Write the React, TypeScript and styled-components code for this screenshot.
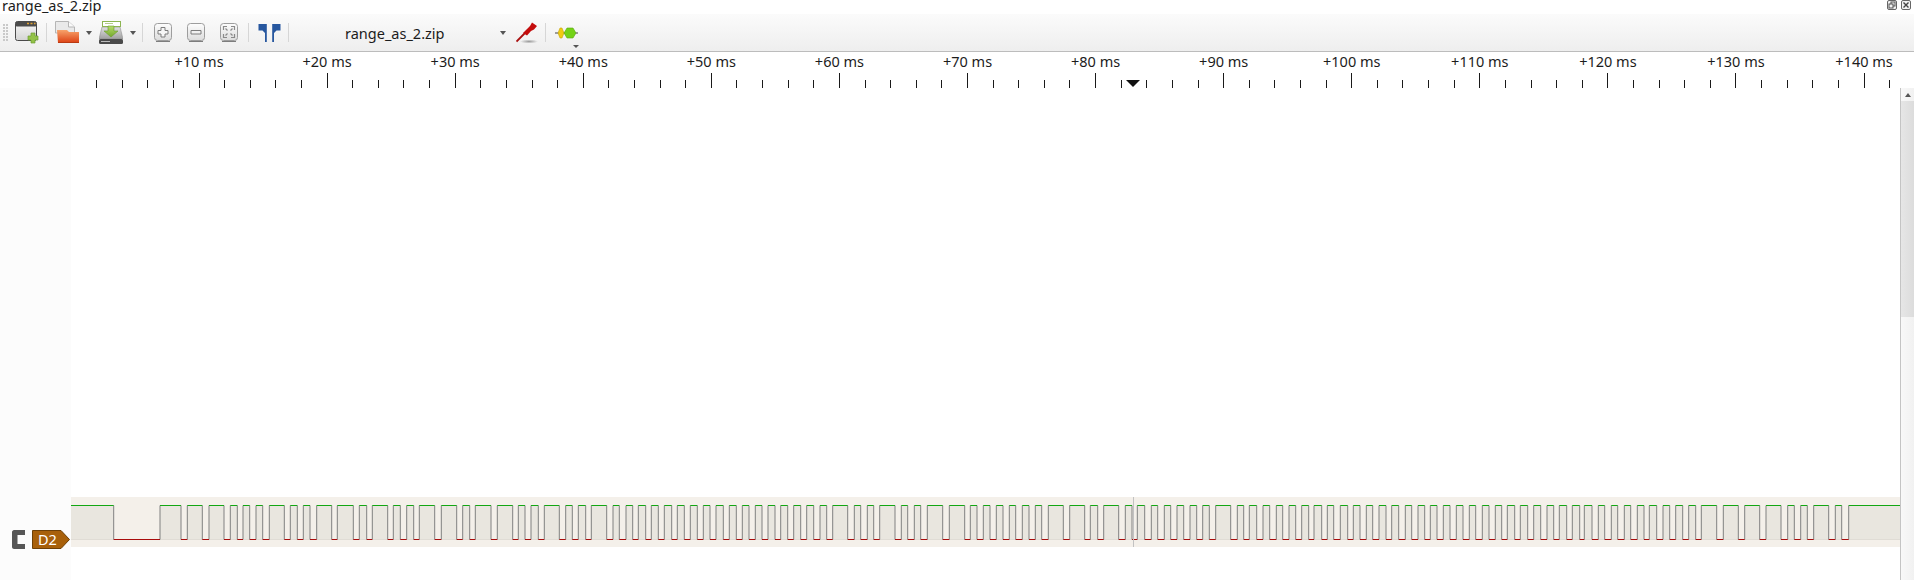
import React from "react";
import styled, { createGlobalStyle } from "styled-components";

const GlobalStyle = createGlobalStyle`
    html, body {
        margin: 0;
        padding: 0;
        background: #fff;
        overflow: hidden;
    }
`;

const UI_FONT = `"Noto Sans", "Open Sans", "DejaVu Sans", sans-serif`;

const Page = styled.div`
    display: flex;
    flex-direction: column;
    width: 1914px;
    height: 580px;
    overflow: hidden;
    font-family: ${UI_FONT};
    color: #1c1c1c;
`;

const TitleBar = styled.div`
    position: relative;
    z-index: 1;
    display: flex;
    justify-content: space-between;
    flex: none;
    height: 14px;
`;

const TitleText = styled.div`
    padding: 1px 0 0 2px;
    font-size: 14.5px;
    line-height: 9px;
    white-space: nowrap;
`;

const WindowButtons = styled.div`
    display: flex;
    gap: 4px;
    padding-right: 3px;
`;

const Toolbar = styled.div`
    display: flex;
    align-items: center;
    flex: none;
    box-sizing: border-box;
    height: 38px;
    padding-left: 3px;
    background: linear-gradient(#fbfbfb, #eeeeee);
    border-bottom: 1px solid #bcbcbc;
`;

const Grip = styled.div`
    width: 6px;
    height: 17px;
    margin-right: 2px;
    background-image: radial-gradient(circle at 1px 1px, #c9c9c9 0.8px, transparent 1px);
    background-size: 3px 3px;
`;

const ToolButton = styled.div<{ $w: number }>`
    display: flex;
    align-items: center;
    justify-content: center;
    flex: none;
    width: ${(p) => p.$w}px;
    height: 30px;
`;

const Separator = styled.div`
    flex: none;
    width: 1px;
    height: 19px;
    margin: 0 4px 0 3px;
    background: #d6d6d6;
`;

const DropArrow = styled.div`
    width: 0;
    height: 0;
    border-left: 3.5px solid transparent;
    border-right: 3.5px solid transparent;
    border-top: 4px solid #555;
`;

const FileCombo = styled.div`
    display: flex;
    align-items: center;
    justify-content: space-between;
    box-sizing: border-box;
    flex: none;
    width: 218px;
    padding: 0 5px 0 52px;
    font-size: 14.5px;
    white-space: nowrap;
`;

const DecoderWrap = styled(ToolButton)`
    position: relative;
`;

const SmallArrow = styled(DropArrow)`
    position: absolute;
    right: 3px;
    bottom: 0;
    border-left-width: 3px;
    border-right-width: 3px;
    border-top-width: 3px;
`;

const Ruler = styled.div`
    display: flex;
    flex-direction: column;
    justify-content: flex-end;
    flex: none;
    height: 36px;
    background: #fff;
`;

const RulerLabels = styled.div`
    display: flex;
    flex: none;
    height: 21px;
    padding-left: 135px;
`;

const RulerLabel = styled.div`
    flex: none;
    width: 128.08px;
    font-size: 14.5px;
    line-height: 18px;
    text-align: center;
    white-space: nowrap;
`;

const RulerTicks = styled.svg`
    display: block;
    flex: none;
`;

const Body = styled.div`
    display: flex;
    flex: 1;
    min-height: 0;
`;

const Gutter = styled.div`
    display: flex;
    align-items: flex-end;
    box-sizing: border-box;
    flex: none;
    width: 71px;
    padding: 0 0 31px 12px;
    background: #fcfcfc;
`;

const ChannelIcon = styled.svg`
    display: block;
    flex: none;
    margin-right: 7px;
`;

const SignalFlag = styled.div`
    position: relative;
    display: flex;
    align-items: center;
    width: 38px;
    height: 19px;
    padding-left: 6px;
    box-sizing: border-box;
    color: #fff;
    font-size: 14.5px;
    line-height: 19px;
`;

const FlagShape = styled.svg`
    position: absolute;
    left: 0;
    top: 0;
`;

const FlagText = styled.span`
    position: relative;
`;

const Viewport = styled.div`
    display: flex;
    flex-direction: column;
    justify-content: flex-end;
    box-sizing: border-box;
    flex: 1;
    min-width: 0;
    padding-bottom: 33px;
    background: #fff;
`;

const TraceBand = styled.div`
    flex: none;
    height: 50px;
    background: #f4f0ea;
`;

const TraceSvg = styled.svg`
    display: block;
`;

const Scrollbar = styled.div`
    display: flex;
    flex-direction: column;
    flex: none;
    width: 13px;
    border-left: 1px solid #c4c4c4;
    background: linear-gradient(90deg, #f8f8f8, #f1f1f1);
`;

const ScrollUp = styled.div`
    display: flex;
    align-items: center;
    justify-content: center;
    flex: none;
    height: 13px;
`;

const ScrollUpArrow = styled.div`
    width: 0;
    height: 0;
    border-left: 3.5px solid transparent;
    border-right: 3.5px solid transparent;
    border-bottom: 4px solid #555;
`;

const ScrollHandle = styled.div`
    flex: none;
    height: 216px;
    background: linear-gradient(90deg, #e6e6e6, #dcdcdc);
`;

const BAND_LEFT = 71;
const BAND_WIDTH = 1829;

// [rise, fall] of every high pulse, in page pixels
const PULSES: [number, number][] = [
    [71, 113.7], [160, 181], [187.3, 202.3], [209, 224], [230.3, 237.3], [243, 249.7], [256, 262.7],
    [269.3, 284.3], [290.3, 297.3], [303.3, 310], [316.7, 331.7], [337.3, 353.3], [359.3, 366.7],
    [372.3, 387.7], [393.3, 400.3], [406.7, 413.7], [419.3, 434.7], [441.3, 456.7], [462.7, 469.7],
    [475.3, 491], [497.3, 512.7], [518.3, 525], [531, 538.3], [544.3, 559.3], [565.7, 572.3],
    [578.3, 585.7], [591.3, 606.7], [613, 619.3], [626, 632.7], [638.3, 645.7], [651.3, 658.3],
    [664.3, 671.7], [677.3, 684.3], [690.3, 697.3], [703.3, 710], [716, 723.3], [729.3, 736.3],
    [742.3, 749], [755.3, 762], [768, 775], [780.7, 787.7], [793.7, 800.7], [806.7, 813.7],
    [820, 826.7], [832.7, 847.7], [854.3, 860.7], [867.3, 873.7], [879.7, 895], [901.3, 907.7],
    [914.3, 920.7], [927.3, 942.7], [949.3, 964.7], [970.3, 977], [983.3, 990], [996.3, 1003],
    [1009.3, 1015.7], [1022.3, 1029], [1035.3, 1041.7], [1048.3, 1063.3], [1069.7, 1084.7],
    [1090.3, 1097.7], [1103.7, 1118.7], [1125.3, 1132], [1137.3, 1144.7], [1151.3, 1157.7],
    [1164.3, 1170.7], [1177, 1183.7], [1190, 1196.7], [1202.7, 1209.3], [1215.7, 1230.7],
    [1237.3, 1243.7], [1249.3, 1256.7], [1263, 1269.7], [1276.3, 1282.7], [1289, 1295.7],
    [1301.7, 1308.7], [1314, 1321.7], [1327.3, 1333.7], [1340.3, 1347.7], [1353.3, 1360],
    [1366.3, 1372.7], [1379, 1386], [1391.7, 1398.7], [1405.3, 1411.7], [1418, 1424.7],
    [1430.3, 1437], [1443.3, 1450], [1456.3, 1463], [1469.3, 1475.7], [1482.3, 1489],
    [1495.3, 1501.7], [1507.3, 1514.7], [1520.3, 1527.7], [1533.7, 1540.7], [1547, 1553.7],
    [1559.3, 1566.7], [1572.3, 1579.7], [1584.3, 1592], [1598.3, 1604.7], [1611.3, 1617.7],
    [1624.3, 1630.7], [1637.3, 1644], [1649.3, 1656.7], [1663, 1669.7], [1675.7, 1682.7],
    [1688.7, 1695.7], [1701.3, 1716.7], [1723.3, 1738.3], [1744.7, 1759.7], [1766, 1781],
    [1787.7, 1794.3], [1800.7, 1807.3], [1813.7, 1828.7], [1835.3, 1841.7], [1848.7, 1900],
];

const HIGH_Y = 8.5;
const LOW_Y = 42.5;

const Trace: React.FC = () => {
    const pulses = PULSES.map(([a, b]) => [a - BAND_LEFT, b - BAND_LEFT]);
    let fill = "";
    let floor = "";
    let green = "";
    let red = "";
    let edges = "";
    pulses.forEach(([a, b], i) => {
        fill += `M${a} 8H${b}V43H${a}Z`;
        floor += `M${a} ${LOW_Y}H${b}`;
        green += `M${a} ${HIGH_Y}H${b}`;
        if (i > 0) edges += `M${a} ${HIGH_Y}V${LOW_Y}`;
        if (i < pulses.length - 1) {
            edges += `M${b} ${HIGH_Y}V${LOW_Y}`;
            red += `M${b} ${LOW_Y}H${pulses[i + 1][0]}`;
        }
    });
    return (
        <TraceSvg width={BAND_WIDTH} height={50}>
            <path d={fill} fill="#e9e6df" />
            <path d={floor} stroke="#e0dcd5" fill="none" />
            <path d={edges} stroke="#808080" fill="none" />
            <path d={green} stroke="#12a712" fill="none" />
            <path d={red} stroke="#a80c0c" fill="none" />
            <line x1={1062.5} x2={1062.5} y1={0} y2={50} stroke="#c2c2c2" />
        </TraceSvg>
    );
};

const TICK_BASE = 199;
const TICK_MAJOR = 128.08;

const Ticks: React.FC = () => {
    let major = "";
    let minor = "";
    for (let k = -4; k < 70; k++) {
        const x = Math.floor(TICK_BASE + (k * TICK_MAJOR) / 5) + 0.5;
        if (x > 1914) break;
        if (k % 5 === 0) major += `M${x} 0V15`;
        else minor += `M${x} 7V15`;
    }
    return (
        <RulerTicks width={1914} height={15}>
            <path d={major} stroke="#1a1a1a" />
            <path d={minor} stroke="#1a1a1a" />
            <path d="M1126 7H1140L1133 14Z" fill="#111" />
        </RulerTicks>
    );
};

const NewSessionIcon = () => (
    <svg width="24" height="23" viewBox="0 0 24 23">
        <defs>
            <linearGradient id="winBody" x1="0" y1="0" x2="0" y2="1">
                <stop offset="0" stopColor="#f8f8f8" />
                <stop offset="1" stopColor="#d4d4d4" />
            </linearGradient>
        </defs>
        <rect x="0.5" y="0.5" width="21" height="19" rx="2" fill="url(#winBody)" stroke="#4a4a4a" />
        <rect x="0.5" y="0.5" width="21" height="5" rx="1.5" fill="#4c4c4c" />
        <path d="M12 2.5h2M15.5 2.5h2M19 2.5h1.5" stroke="#e0a030" strokeWidth="1.6" />
        <path d="M16 12h4v3h3v4h-3v3h-4v-3h-3v-4h3z" fill="#93c248" stroke="#6f9e30" strokeWidth="0.7" />
    </svg>
);

const OpenIcon = () => (
    <svg width="24" height="23" viewBox="0 0 24 23">
        <defs>
            <linearGradient id="folder" x1="0" y1="0" x2="0" y2="1">
                <stop offset="0" stopColor="#f7a36b" />
                <stop offset="1" stopColor="#dc3f12" />
            </linearGradient>
        </defs>
        <path d="M0.5 0.5H13.5L19.5 6V12H0.5Z" fill="#e9e9e9" stroke="#b5b5b5" />
        <path d="M13.5 0.5V6H19.5" fill="#fafafa" stroke="#b5b5b5" />
        <path d="M2 9H12L14 11H24V22H3Z" fill="url(#folder)" />
        <path d="M3 22H24V21H3Z" fill="#b93a12" />
    </svg>
);

const SaveIcon = () => (
    <svg width="24" height="23" viewBox="0 0 24 23">
        <defs>
            <linearGradient id="drive" x1="0" y1="0" x2="0" y2="1">
                <stop offset="0" stopColor="#e0e0e0" />
                <stop offset="1" stopColor="#9f9f9f" />
            </linearGradient>
            <linearGradient id="saveArrow" x1="0" y1="0" x2="0" y2="1">
                <stop offset="0" stopColor="#b6dc6a" />
                <stop offset="1" stopColor="#73a82c" />
            </linearGradient>
        </defs>
        <path d="M3 6H21L24 18H0Z" fill="url(#drive)" stroke="#8f8f8f" strokeWidth="0.6" />
        <rect x="0" y="18" width="24" height="5" rx="1.5" fill="#4a4a4a" />
        <rect x="2" y="20" width="9" height="1" fill="#bbb" />
        <rect x="3.5" y="0.5" width="18" height="5" fill="#fff" stroke="#8db552" />
        <rect x="6" y="2" width="8" height="1" fill="#b5cc8c" />
        <path d="M9 5H15V10H19L12 16L5 10H9Z" fill="url(#saveArrow)" stroke="#6a9a2c" strokeWidth="0.6" />
    </svg>
);

const ZoomFrame: React.FC<{ id: string; children: React.ReactNode }> = ({ id, children }) => (
    <svg width="18" height="19" viewBox="0 0 18 19">
        <defs>
            <linearGradient id={id} x1="0" y1="0" x2="0" y2="1">
                <stop offset="0" stopColor="#fdfdfd" />
                <stop offset="1" stopColor="#dcdcdc" />
            </linearGradient>
        </defs>
        <rect x="0.5" y="0.5" width="17" height="17" rx="3" fill={`url(#${id})`} stroke="#9d9d9d" />
        <path d="M2 18.5H16" stroke="#7d7d7d" />
        {children}
    </svg>
);

const ZoomInIcon = () => (
    <ZoomFrame id="zi">
        <path d="M7 4.5H11V7.5H14V11H11V14H7V11H4V7.5H7Z" fill="#f6f6f6" stroke="#7c7c7c" />
    </ZoomFrame>
);

const ZoomOutIcon = () => (
    <ZoomFrame id="zo">
        <path d="M4 7.5H14V11H4Z" fill="#f0f0f0" stroke="#7c7c7c" />
    </ZoomFrame>
);

const ZoomFitIcon = () => (
    <ZoomFrame id="zf">
        <path
            d="M3.5 7V3.5H7M11 3.5H14.5V7M14.5 11V14.5H11M7 14.5H3.5V11M5.5 5.5L7.5 7.5M12.5 5.5L10.5 7.5M12.5 12.5L10.5 10.5M5.5 12.5L7.5 10.5"
            fill="none"
            stroke="#8a8a8a"
            strokeWidth="1.2"
        />
    </ZoomFrame>
);

const CursorsIcon = () => (
    <svg width="23" height="18" viewBox="0 0 23 18">
        <path d="M0.5 0H8.8V18H7V9L4.5 6.5H0.5Z" fill="#27579f" />
        <path d="M14.2 0H22.5V6.5H18.5L16 9V18H14.2Z" fill="#27579f" />
    </svg>
);

const ProbeIcon = () => (
    <svg width="22" height="22" viewBox="0 0 22 22">
        <defs>
            <radialGradient id="probeShadow">
                <stop offset="0" stopColor="#9a9a9a" />
                <stop offset="1" stopColor="#9a9a9a" stopOpacity="0" />
            </radialGradient>
        </defs>
        <ellipse cx="13" cy="19.5" rx="9" ry="2" fill="url(#probeShadow)" />
        <path d="M0.5 19.5L9 11" stroke="#a90f0f" strokeWidth="1.8" />
        <path d="M7 11L11 7L14 4L16 0.5L21 4L18 7.5L15 9L11 13.5Z" fill="#c40d0d" />
    </svg>
);

const DecoderIcon = () => (
    <svg width="23" height="12" viewBox="0 0 23 12">
        <path d="M0 6H23" stroke="#444" />
        <path d="M3 6L5 1H7L9 6L7 11H5Z" fill="#f0cb10" stroke="#c5a40a" strokeWidth="0.6" />
        <path d="M9 6L12 1H18L21 6L18 11H12Z" fill="#73d216" stroke="#5aa80f" strokeWidth="0.6" />
    </svg>
);

const RestoreIcon = () => (
    <svg width="10" height="10" viewBox="0 0 10 10">
        <rect x="0.5" y="0.5" width="9" height="9" rx="1.5" fill="#f2f2f2" stroke="#666" />
        <rect x="4" y="2" width="4" height="4" fill="none" stroke="#555" />
        <rect x="2" y="4" width="4" height="4" fill="#f2f2f2" stroke="#555" />
    </svg>
);

const CloseIcon = () => (
    <svg width="10" height="10" viewBox="0 0 10 10">
        <rect x="0.5" y="0.5" width="9" height="9" rx="1.5" fill="#f2f2f2" stroke="#666" />
        <path d="M2.5 2.5L7.5 7.5M7.5 2.5L2.5 7.5" stroke="#444" strokeWidth="1.4" />
    </svg>
);

const LABELS = [10, 20, 30, 40, 50, 60, 70, 80, 90, 100, 110, 120, 130, 140];

const App: React.FC = () => {
    return (
        <Page>
            <GlobalStyle />
            <TitleBar>
                <TitleText>range_as_2.zip</TitleText>
                <WindowButtons>
                    <RestoreIcon />
                    <CloseIcon />
                </WindowButtons>
            </TitleBar>
            <Toolbar>
                <Grip />
                <ToolButton $w={32}>
                    <NewSessionIcon />
                </ToolButton>
                <Separator />
                <ToolButton $w={32}>
                    <OpenIcon />
                </ToolButton>
                <ToolButton $w={12}>
                    <DropArrow />
                </ToolButton>
                <ToolButton $w={32}>
                    <SaveIcon />
                </ToolButton>
                <ToolButton $w={12}>
                    <DropArrow />
                </ToolButton>
                <Separator />
                <ToolButton $w={32}>
                    <ZoomInIcon />
                </ToolButton>
                <ToolButton $w={33}>
                    <ZoomOutIcon />
                </ToolButton>
                <ToolButton $w={33}>
                    <ZoomFitIcon />
                </ToolButton>
                <Separator />
                <ToolButton $w={32}>
                    <CursorsIcon />
                </ToolButton>
                <Separator />
                <FileCombo>
                    range_as_2.zip
                    <DropArrow />
                </FileCombo>
                <ToolButton $w={31}>
                    <ProbeIcon />
                </ToolButton>
                <Separator />
                <DecoderWrap $w={32}>
                    <DecoderIcon />
                    <SmallArrow />
                </DecoderWrap>
            </Toolbar>
            <Ruler>
                <RulerLabels>
                    {LABELS.map((n) => (
                        <RulerLabel key={n}>+{n} ms</RulerLabel>
                    ))}
                </RulerLabels>
                <Ticks />
            </Ruler>
            <Body>
                <Gutter>
                    <ChannelIcon width="13" height="19" viewBox="0 0 13 19">
                        <path
                            d="M2 0H13V5H5.5V14H13V19H2C1 19 0 18 0 17V2C0 1 1 0 2 0Z"
                            fill="#565656"
                        />
                    </ChannelIcon>
                    <SignalFlag>
                        <FlagShape width="38" height="19" viewBox="0 0 38 19">
                            <path d="M0.5 0.5H29L37.5 9.5L29 18.5H0.5Z" fill="#a8600a" stroke="#6e4006" />
                        </FlagShape>
                        <FlagText>D2</FlagText>
                    </SignalFlag>
                </Gutter>
                <Viewport>
                    <TraceBand>
                        <Trace />
                    </TraceBand>
                </Viewport>
                <Scrollbar>
                    <ScrollUp>
                        <ScrollUpArrow />
                    </ScrollUp>
                    <ScrollHandle />
                </Scrollbar>
            </Body>
        </Page>
    );
};

export default App;
